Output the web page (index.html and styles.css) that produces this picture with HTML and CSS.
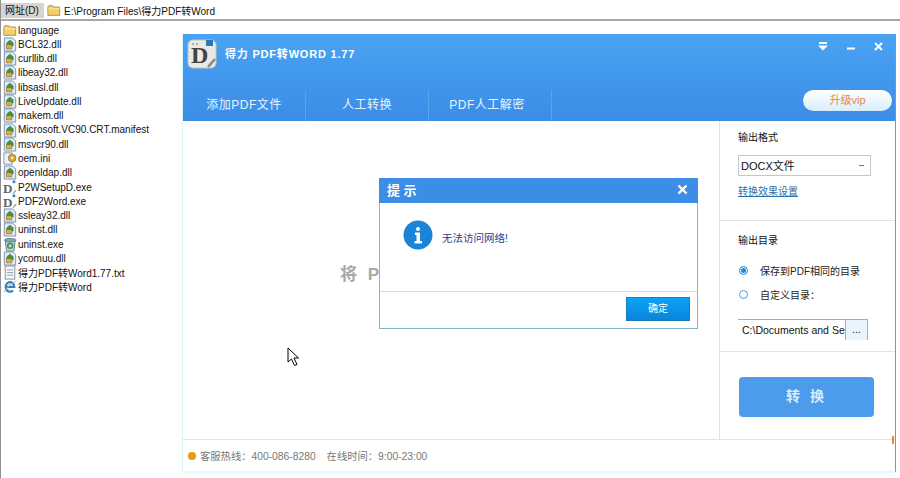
FILE: index.html
```html
<!DOCTYPE html>
<html lang="zh">
<head>
	<meta charset="UTF-8">
	<title>得力PDF转Word</title>
	<link rel="stylesheet" href="styles.css">
</head>
<body>
	<svg class="defs" width="0" height="0">
		<symbol id="i-folder" viewBox="0 0 16 16">
			<path d="M1 4 L2 2.5 L6.5 2.5 L7.5 4 L14 4 L14.5 5 L14.5 13.5 L1 13.5 Z" fill="#f3cf6b" stroke="#a98a35"></path>
			<path d="M1.5 6 L14.5 6" stroke="#fdf0b8"></path>
		</symbol>
		<symbol id="i-dll" viewBox="0 0 16 16">
			<path d="M1.5 .5 L11 .5 L14.5 4 L14.5 15.5 L1.5 15.5 Z" fill="#dfeaf6" stroke="#6f8aa6"></path>
			<path d="M4 6 L8 2.5 L12 6 L12 10 L4 10 Z" fill="#3f9146"></path>
			<path d="M4 8 L10 8 L10 13 L4 13 Z" fill="#dcae3e" stroke="#6e5a1e" stroke-width=".6"></path>
		</symbol>
		<symbol id="i-ini" viewBox="0 0 16 16">
			<path d="M1 1.5 L10.5 1.5 L10.5 14.5 L1 14.5 Z" fill="#eef3f8" stroke="#7c8fa3"></path>
			<circle cx="10.5" cy="7.5" r="4.4" fill="#dcaa3d" stroke="#8c6a1c" stroke-width=".8"></circle>
			<circle cx="10.5" cy="7.5" r="1.4" fill="#fff2c4"></circle>
		</symbol>
		<symbol id="i-d" viewBox="0 0 16 16">
			<rect x="11" y="0" width="3" height="3" fill="#2f7fc4"></rect>
			<text x="0" y="14" class="icon-d">D</text>
			<path d="M11.5 15 L15 11" stroke="#999" stroke-width="1.6"></path>
		</symbol>
		<symbol id="i-bin" viewBox="0 0 16 16">
			<path d="M2.5 3 L14 3 L12.5 15.5 L4 15.5 Z" fill="#c6d3dc" stroke="#5f7786"></path>
			<ellipse cx="8.2" cy="3" rx="6.5" ry="2" fill="#8ba4b3" stroke="#5f7786"></ellipse>
			<circle cx="8.2" cy="9.5" r="2.8" fill="none" stroke="#3d9a48" stroke-width="1.8"></circle>
		</symbol>
		<symbol id="i-txt" viewBox="0 0 16 16">
			<rect x="2.5" y=".5" width="11" height="15" fill="#f4f6f8" stroke="#7a8794"></rect>
			<path d="M4.5 5 L11.5 5 M4.5 8 L11.5 8 M4.5 11 L11.5 11" stroke="#8e98a2"></path>
		</symbol>
		<symbol id="i-ie" viewBox="0 0 16 16">
			<path d="M3 8.5 H13 A5 5.5 0 1 0 11.5 12.5" fill="#cfe6fa" stroke="#2f7fcf" stroke-width="2.4"></path>
			<path d="M1 14.5 Q7 5 15 1.5" fill="none" stroke="#e0b040"></path>
		</symbol>
	</svg>

	<div class="address">
		<div class="address-label">网址(D)</div>
		<svg class="icon"><use href="#i-folder"></use></svg>
		<div class="address-path">E:\Program Files\得力PDF转Word</div>
	</div>

	<div class="main">
		<ul class="files">
			<li><svg class="icon"><use href="#i-folder"></use></svg>language</li>
			<li><svg class="icon"><use href="#i-dll"></use></svg>BCL32.dll</li>
			<li><svg class="icon"><use href="#i-dll"></use></svg>curllib.dll</li>
			<li><svg class="icon"><use href="#i-dll"></use></svg>libeay32.dll</li>
			<li><svg class="icon"><use href="#i-dll"></use></svg>libsasl.dll</li>
			<li><svg class="icon"><use href="#i-dll"></use></svg>LiveUpdate.dll</li>
			<li><svg class="icon"><use href="#i-dll"></use></svg>makem.dll</li>
			<li><svg class="icon"><use href="#i-dll"></use></svg>Microsoft.VC90.CRT.manifest</li>
			<li><svg class="icon"><use href="#i-dll"></use></svg>msvcr90.dll</li>
			<li><svg class="icon"><use href="#i-ini"></use></svg>oem.ini</li>
			<li><svg class="icon"><use href="#i-dll"></use></svg>openldap.dll</li>
			<li><svg class="icon"><use href="#i-d"></use></svg>P2WSetupD.exe</li>
			<li><svg class="icon"><use href="#i-d"></use></svg>PDF2Word.exe</li>
			<li><svg class="icon"><use href="#i-dll"></use></svg>ssleay32.dll</li>
			<li><svg class="icon"><use href="#i-dll"></use></svg>uninst.dll</li>
			<li><svg class="icon"><use href="#i-bin"></use></svg>uninst.exe</li>
			<li><svg class="icon"><use href="#i-dll"></use></svg>ycomuu.dll</li>
			<li><svg class="icon"><use href="#i-txt"></use></svg>得力PDF转Word1.77.txt</li>
			<li><svg class="icon"><use href="#i-ie"></use></svg>得力PDF转Word</li>
		</ul>

		<div class="app">
			<div class="app-head">
				<div class="title-row">
					<svg class="logo" viewBox="0 0 30 30">
						<rect x="1" y="1" width="28" height="28" rx="5" fill="#e9e9e5" stroke="#c4c4bf"></rect>
						<circle cx="6" cy="5" r="1" fill="#999"></circle>
						<circle cx="10" cy="5" r="1" fill="#999"></circle>
						<rect x="19" y="1" width="7" height="6" fill="#2a78b8"></rect>
						<text x="4" y="24" class="logo-d">D</text>
						<path d="M21 28 L28 20" stroke="#8a8a8a" stroke-width="2.5"></path>
					</svg>
					<div class="app-title">得力 PDF转WORD 1.77</div>
					<div class="win-btns">
						<svg width="10" height="9" viewBox="0 0 10 9"><path d="M1 0 H9 V2 H1 Z M0 3.5 H10 L5 8.5 Z" fill="#fff"></path></svg>
						<svg width="8" height="9" viewBox="0 0 8 9"><path d="M0 5.5 H8 V7.5 H0 Z" fill="#fff"></path></svg>
						<svg width="9" height="9" viewBox="0 0 9 9"><path d="M1 1 L8 8 M8 1 L1 8" stroke="#fff" stroke-width="2"></path></svg>
					</div>
				</div>
				<div class="tab-row">
					<div class="tab">添加PDF文件</div>
					<div class="tab">人工转换</div>
					<div class="tab tab-last">PDF人工解密</div>
					<div class="vip">升级vip</div>
				</div>
			</div>

			<div class="app-body">
				<div class="drop-area"><span class="drop-text">将 PDF</span></div>
				<div class="side">
					<div class="side-sec sec-format">
						<div class="side-title">输出格式</div>
						<div class="select">DOCX文件<span class="select-arrow"></span></div>
						<a class="side-link">转换效果设置</a>
					</div>
					<div class="side-sec sec-dir">
						<div class="side-title">输出目录</div>
						<div class="radio-row"><span class="radio radio-on"></span>保存到PDF相同的目录</div>
						<div class="radio-row"><span class="radio"></span>自定义目录：</div>
						<div class="path-box">
							<div class="path-text">C:\Documents and Se</div>
							<div class="path-btn">...</div>
						</div>
					</div>
					<div class="side-sec sec-go">
						<div class="go-btn">转 换</div>
					</div>
				</div>
			</div>

			<div class="app-foot">
				<span class="foot-dot"></span>
				<span>客服热线：400-086-8280</span>
				<span class="foot-time">在线时间：9:00-23:00</span>
			</div>
		</div>
	</div>

	<div class="dialog">
		<div class="dialog-head">
			<span>提 示</span>
			<svg width="11" height="11" viewBox="0 0 11 11"><path d="M1.5 1.5 L9.5 9.5 M9.5 1.5 L1.5 9.5" stroke="#fff" stroke-width="2.4"></path></svg>
		</div>
		<div class="dialog-body">
			<svg class="info" viewBox="0 0 30 30">
				<circle cx="15" cy="15" r="14.5" fill="#1a84d8"></circle>
				<circle cx="15" cy="9" r="2" fill="#fff"></circle>
				<path d="M12 12.5 H17 V21 H19 V23.5 H11.5 V21 H13.5 V15 H12 Z" fill="#fff"></path>
			</svg>
			<div class="dialog-msg">无法访问网络!</div>
		</div>
		<div class="dialog-foot">
			<div class="ok-btn">确定</div>
		</div>
	</div>

	<div class="edge-mark"></div>

	<svg class="cursor" width="13" height="20" viewBox="0 0 13 20">
		<path d="M1 1 L1 15 L4.5 12 L7.5 18.5 L10 17.5 L7 11 L11.5 11 Z" fill="#fff" stroke="#000"></path>
	</svg>
</body>
</html>
```

FILE: styles.css
```css
*{
	box-sizing: border-box;
}
html, body{
	margin: 0;
	height: 100%;
	overflow: hidden;
}
body{
	width: 900px;
	height: 478px;
	background: #fff;
	color: #111;
	font-family: "Liberation Sans", "Noto Sans CJK SC", sans-serif;
	font-size: 10px;
	border-left: 1px solid #8f8f8f;
}
.defs{
	position: absolute;
}
.icon{
	width: 14px;
	height: 15px;
	flex: none;
}
.icon-d{
	font-family: "Liberation Serif", serif;
	font-size: 15px;
	font-weight: bold;
	fill: #666;
}

/* 地址栏 */
.address{
	display: flex;
	align-items: center;
	height: 21px;
	padding-top: 2px;
	margin-left: -1px;
	border-bottom: 2px solid #a8a8a8;
	font-size: 10px;
}
.address-label{
	width: 44px;
	height: 15px;
	line-height: 15px;
	margin-right: 3px;
	padding-left: 5px;
	white-space: nowrap;
	background: #d6d4cc;
}
.address-path{
	margin-left: 3px;
}

.main{
	display: flex;
	height: 457px;
}

/* 文件列表 */
.files{
	width: 181px;
	margin: 2px 0 0;
	padding: 0 0 0 2px;
	list-style: none;
	flex: none;
	font-size: 10px;
}
.files li{
	display: flex;
	align-items: center;
	gap: 1px;
	height: 14.28px;
	white-space: nowrap;
}

/* 主窗口 */
.app{
	width: 714px;
	height: 439px;
	margin-top: 13px;
	display: flex;
	flex-direction: column;
	border-left: 1px solid #d8f4fb;
	border-right: 1px solid #5f9fd8;
	border-bottom: 2px solid #e6fafd;
}
.app-head{
	height: 87px;
	flex: none;
	background: linear-gradient(#4aa3f2, #3a8de6);
	color: #fff;
}
.title-row{
	height: 56px;
	display: flex;
	align-items: flex-start;
	padding: 5px 0 0 4px;
}
.logo{
	width: 30px;
	height: 30px;
}
.logo-d{
	font-family: "Liberation Serif", serif;
	font-size: 24px;
	font-weight: bold;
	fill: #444;
}
.app-title{
	margin: 6px 0 0 8px;
	font-size: 11px;
	font-weight: bold;
	letter-spacing: .8px;
}
.win-btns{
	margin-left: auto;
	display: flex;
	align-items: center;
	gap: 19px;
	padding: 3px 12px 0 0;
}
.tab-row{
	height: 31px;
	display: flex;
	align-items: center;
	position: relative;
}
.tab{
	width: 123px;
	height: 31px;
	line-height: 31px;
	text-align: center;
	font-size: 12px;
	letter-spacing: .5px;
	color: #e8f4ff;
	border-right: 1px solid #5ca4ea;
}
.tab-last{
	padding-right: 6px;
}
.vip{
	position: absolute;
	right: 3px;
	top: 0;
	width: 89px;
	height: 21px;
	line-height: 21px;
	border-radius: 11px;
	text-align: center;
	font-size: 11px;
	color: #e08a4a;
	background: linear-gradient(#fff, #d6eefa);
}

.app-body{
	flex: 1;
	display: flex;
	min-height: 0;
}
.drop-area{
	flex: 1;
	padding: 139px 0 0 157px;
}
.drop-text{
	font-size: 17px;
	font-weight: bold;
	letter-spacing: 3px;
	color: #a8a8a8;
}

/* 右侧面板 */
.side{
	width: 176px;
	flex: none;
	display: flex;
	flex-direction: column;
	border-left: 1px solid #dfe3e6;
}
.side-sec{
	padding: 0 0 0 18px;
	border-bottom: 1px solid #dfe3e6;
}
.sec-format{
	height: 100px;
	padding-top: 9px;
}
.sec-dir{
	height: 131px;
	padding-top: 12px;
}
.sec-go{
	flex: 1;
	border-bottom: 0;
	padding: 25px 0 0 19px;
}
.side-title{
	height: 15px;
	line-height: 15px;
}
.select{
	width: 133px;
	height: 21px;
	line-height: 20px;
	margin-top: 10px;
	padding-left: 2px;
	font-size: 11px;
	border: 1px solid #c4c8cc;
	position: relative;
}
.select-arrow{
	position: absolute;
	right: 6px;
	top: 9px;
	width: 5px;
	height: 1px;
	background: #4a7fa8;
}
.side-link{
	display: block;
	margin-top: 7px;
	color: #2a6fa8;
	text-decoration: underline;
}
.radio-row{
	display: flex;
	align-items: center;
	height: 15px;
	margin-top: 9px;
	color: #222;
}
.sec-dir .side-title + .radio-row{
	margin-top: 15px;
}
.radio{
	width: 9px;
	height: 9px;
	margin: 0 12px 0 1px;
	border-radius: 50%;
	border: 1px solid #4aa0d8;
	flex: none;
}
.radio-on{
	background: #2a86d0;
	box-shadow: inset 0 0 0 1px #fff;
}
.path-box{
	display: flex;
	width: 130px;
	height: 21px;
	margin-top: 17px;
	border-top: 1px solid #9fb0bc;
	font-size: 10.5px;
}
.path-text{
	flex: 1;
	padding-left: 4px;
	line-height: 20px;
	white-space: nowrap;
}
.path-btn{
	width: 23px;
	flex: none;
	text-align: center;
	line-height: 18px;
	background: #e9f4fc;
	border-left: 1px solid #9fb0bc;
	border-right: 1px solid #9fb0bc;
}
.go-btn{
	width: 135px;
	height: 40px;
	line-height: 38px;
	border-radius: 4px;
	text-align: center;
	font-size: 14px;
	font-weight: bold;
	letter-spacing: 3px;
	color: #d8ecfc;
	background: #4d9ceb;
}

/* 底部 */
.app-foot{
	height: 32px;
	flex: none;
	display: flex;
	align-items: center;
	padding-left: 5px;
	font-size: 10.3px;
	color: #777;
	border-top: 1px solid #e0e3e5;
}
.foot-dot{
	width: 8px;
	height: 8px;
	margin-right: 4px;
	border-radius: 50%;
	background: #e89b10;
}
.foot-time{
	margin-left: 11px;
}

/* 提示框 */
.dialog{
	position: absolute;
	left: 379px;
	top: 178px;
	width: 319px;
	height: 151px;
	display: flex;
	flex-direction: column;
	background: #fff;
	border: 1px solid #7fb4d2;
	border-top: 0;
}
.dialog-head{
	height: 25px;
	margin: 0 -1px;
	flex: none;
	display: flex;
	align-items: center;
	justify-content: space-between;
	padding: 0 10px 3px 8px;
	background: #3b8de6;
	color: #fff;
	font-size: 13px;
	font-weight: bold;
}
.dialog-body{
	flex: 1;
	display: flex;
	align-items: flex-start;
	padding: 17px 0 0 23px;
	border-bottom: 1px solid #dcdfe2;
}
.info{
	width: 30px;
	height: 30px;
}
.dialog-msg{
	margin: 10px 0 0 9px;
	color: #2a3f8a;
	font-size: 10.5px;
}
.dialog-foot{
	height: 36px;
	flex: none;
	display: flex;
	justify-content: flex-end;
	padding: 5px 7px 0 0;
}
.ok-btn{
	width: 64px;
	height: 24px;
	line-height: 22px;
	text-align: center;
	color: #fff;
	background: linear-gradient(#0aa4f4, #0a84de);
	border: 1px solid #1a7cbc;
}
.edge-mark{
	position: absolute;
	left: 892px;
	top: 436px;
	width: 2px;
	height: 8px;
	background: #e88a30;
}
.cursor{
	position: absolute;
	left: 287px;
	top: 347px;
}
```
